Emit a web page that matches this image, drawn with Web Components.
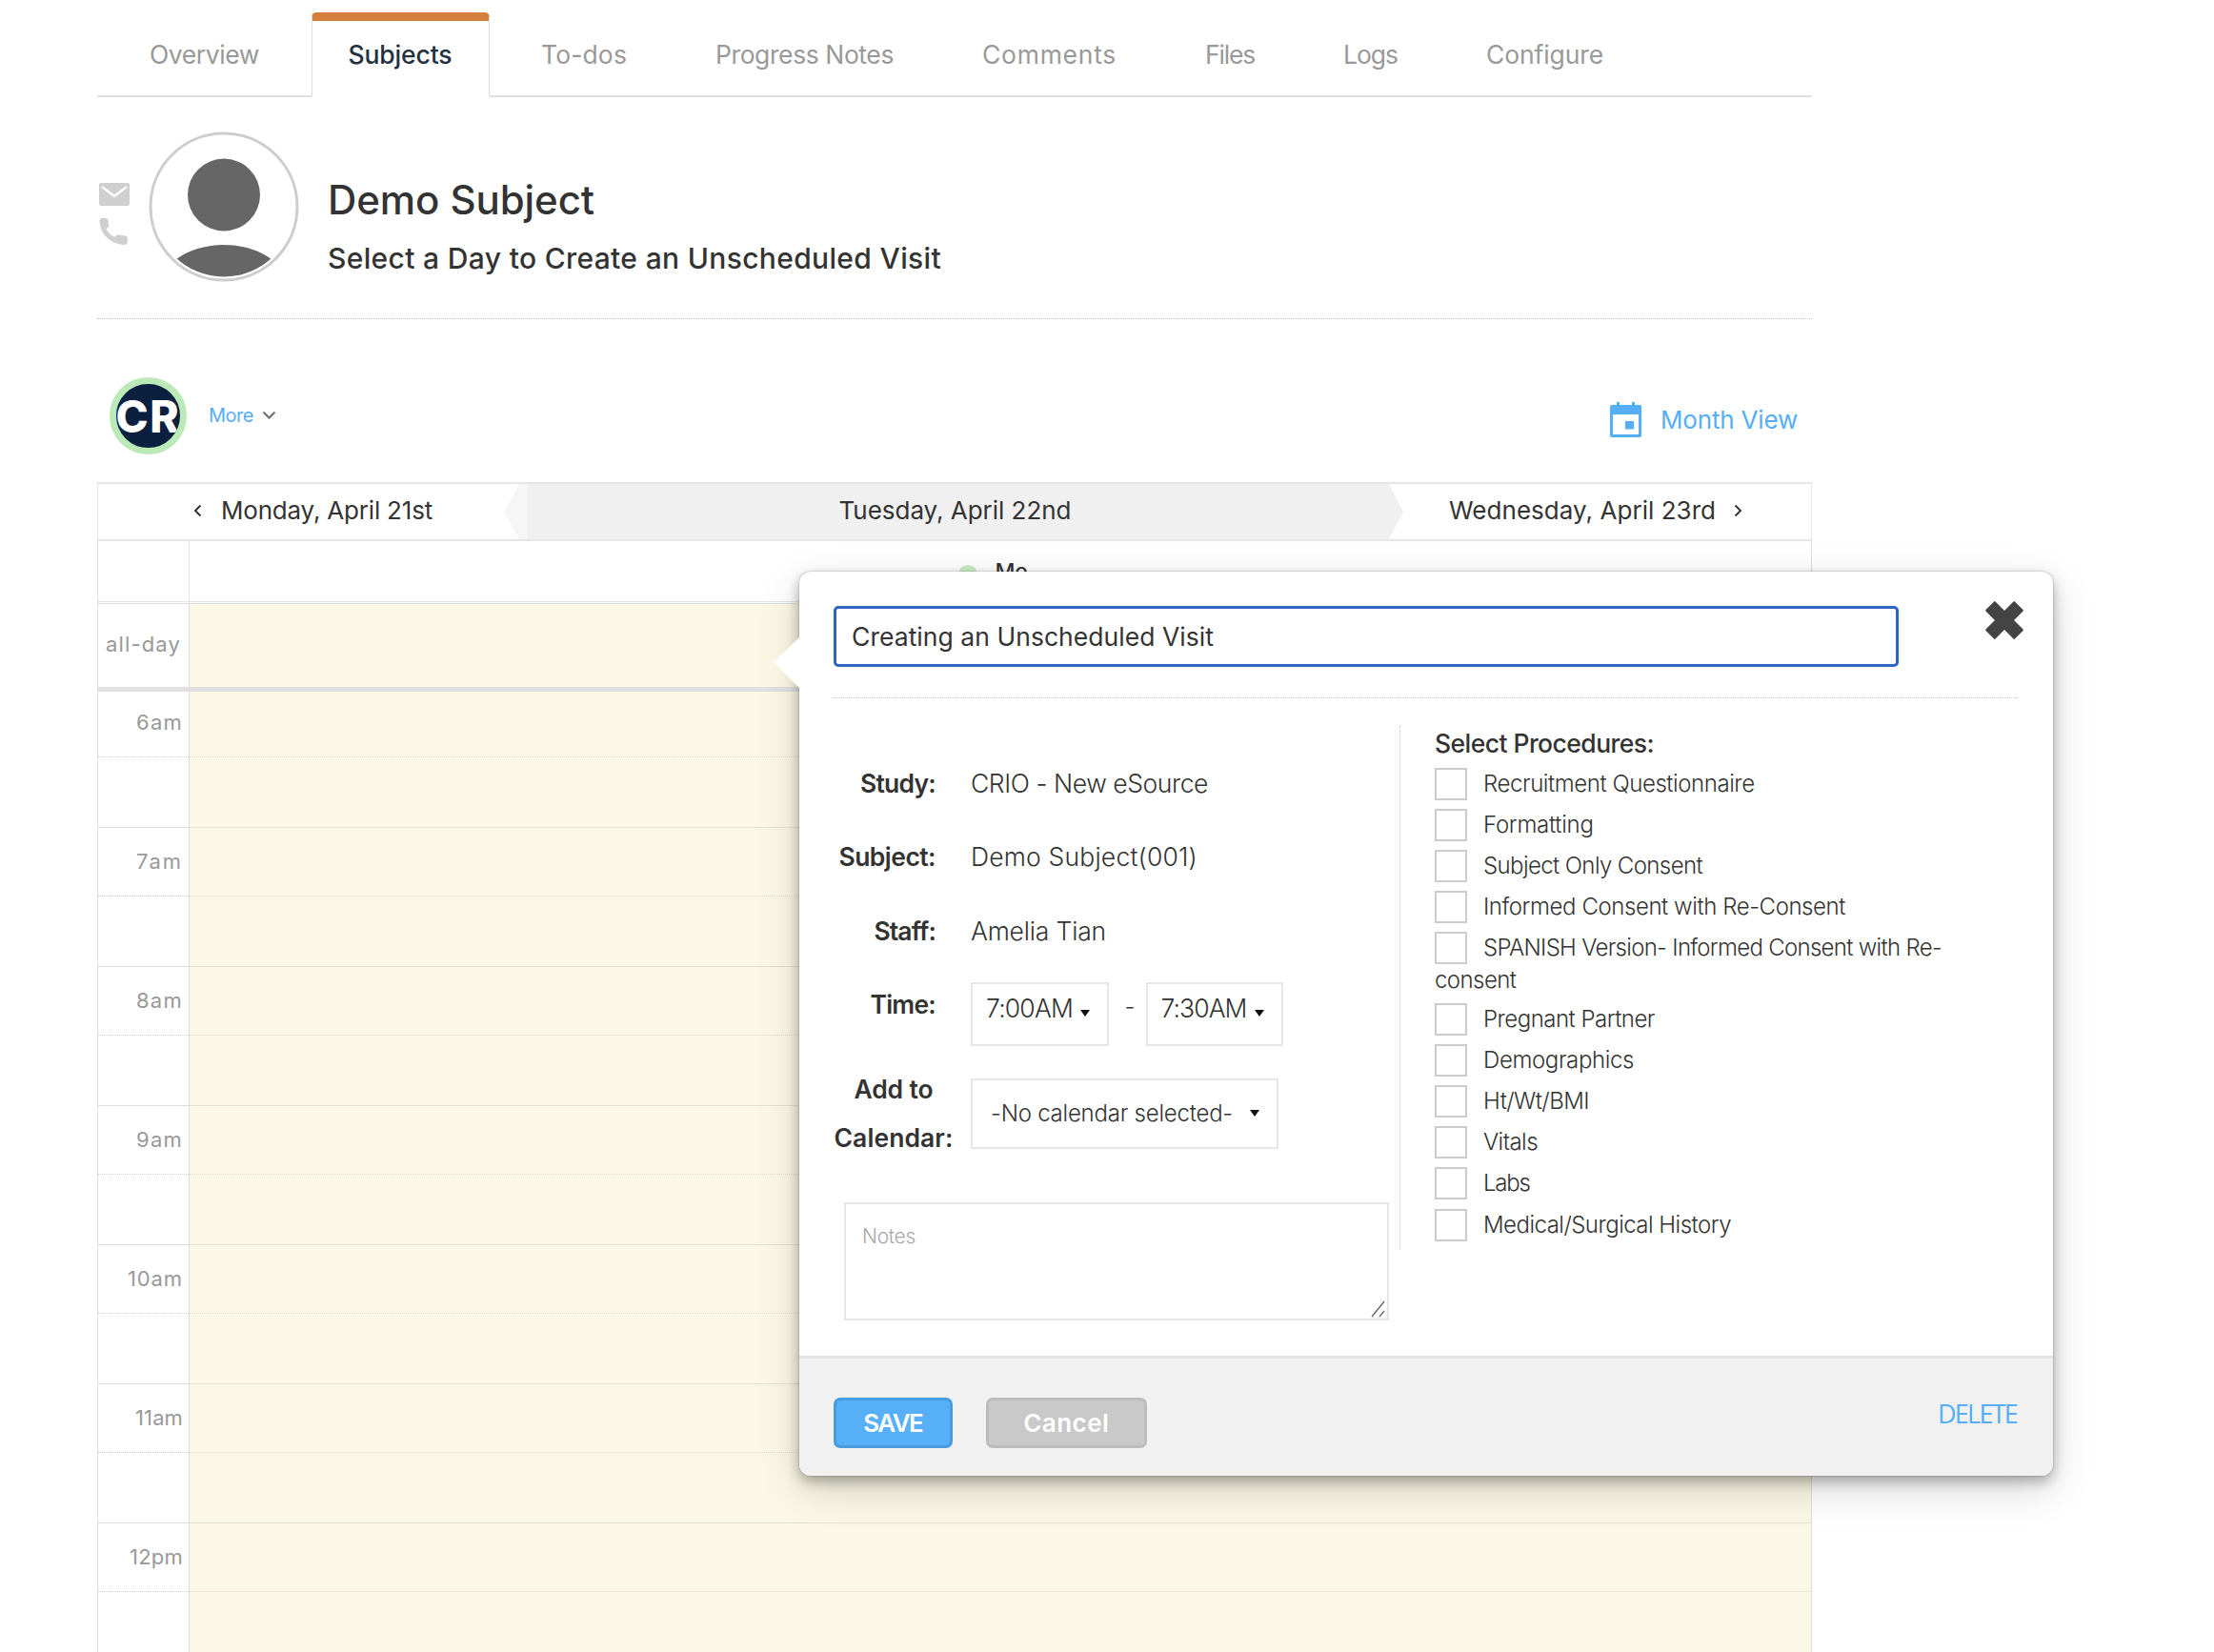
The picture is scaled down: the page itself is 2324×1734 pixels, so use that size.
<!DOCTYPE html>
<html lang="en">
<head>
<meta charset="utf-8">
<title>Creating an Unscheduled Visit</title>
<style>
html,body{margin:0;padding:0;background:#fff}
body{width:2324px;height:1734px;overflow:hidden;position:relative;font-family:Inter,"Noto Sans",sans-serif;color:#333}
</style>
</head>
<body>
<main-col>
  <tab-bar>
    <tab-item style="width:192px"><x-t w="115">Overview</x-t></tab-item>
    <tab-item active style="width:187px"><x-t w="109">Subjects</x-t></tab-item>
    <tab-item style="width:167px"><x-t w="90">To-dos</x-t></tab-item>
    <tab-item style="width:264px"><x-t w="187">Progress Notes</x-t></tab-item>
    <tab-item style="width:218px"><x-t w="141">Comments</x-t></tab-item>
    <tab-item style="width:129px"><x-t w="52">Files</x-t></tab-item>
    <tab-item style="width:134px"><x-t w="57">Logs</x-t></tab-item>
    <tab-item style="width:200px"><x-t w="123">Configure</x-t></tab-item>
  </tab-bar>
  <subject-header>
    <x-t slot="name" w="280">Demo Subject</x-t>
    <x-t slot="sub" w="644">Select a Day to Create an Unscheduled Visit</x-t>
  </subject-header>
  <cal-toolbar></cal-toolbar>
  <day-nav></day-nav>
  <cal-grid></cal-grid>
</main-col>
<visit-popup></visit-popup>

<script>
class MainCol extends HTMLElement{
  constructor(){super();this.attachShadow({mode:'open'}).innerHTML=`<style>:host{display:block;width:1800px;height:1734px;overflow:hidden;margin-left:102px}</style><slot></slot>`}
}
class TabBar extends HTMLElement{
  constructor(){super();this.attachShadow({mode:'open'}).innerHTML=`<style>
  :host{display:flex;gap:16px;box-sizing:border-box;height:102px;padding:13px 0 0 16.5px;border-bottom:2px solid #e0e0e0;font-size:26.5px}
  </style><slot></slot>`}
}
class TabItem extends HTMLElement{
  constructor(){super();this.attachShadow({mode:'open'}).innerHTML=`<style>
  :host{display:flex;align-items:center;justify-content:center;box-sizing:border-box;height:89px;padding-bottom:11px;color:#999;border:solid transparent;border-width:9px 1px 0;flex:none;line-height:36px}
  :host([active]){color:#22303f;font-weight:500;background:#fff;border-color:#d4803c #ddd #fff;border-top-left-radius:5px;border-top-right-radius:5px;border-bottom:2px solid #fff;padding-bottom:9px}
  </style><slot></slot>`}
}
class SubjectHeader extends HTMLElement{
  constructor(){super();this.attachShadow({mode:'open'}).innerHTML=`<style>
  :host{display:flex;align-items:flex-start;box-sizing:border-box;height:233px;padding-top:36px;border-bottom:1px dotted #c4c4c4}
  .contact{width:32px;margin:54px 19.500px 0 2px;display:flex;flex-direction:column;gap:12px}
  svg{display:block}
  .txt{margin-left:30.500px;padding-top:42px;display:flex;flex-direction:column}
  .name{font-size:42px;line-height:60px;font-weight:500;color:#333}
  .sub{font-size:30px;line-height:40px;font-weight:500;color:#333;margin-top:11px}
  </style>
  <div class="contact">
    <svg width="32" height="24" viewBox="0 0 32 24"><rect width="32" height="24" rx="2" fill="#cfcfcf"/><path d="M3 4l13 10L29 4" fill="none" stroke="#fff" stroke-width="2.4"/></svg>
    <svg width="32" height="31" viewBox="0 0 30 30" preserveAspectRatio="none"><path d="M3 1h3.500c1.200 0 2 .8 2.200 1.800l.8 5.200c.1 1-.2 1.900-.9 2.500l-1.600 1.400c1.800 4 4.600 6.700 8.500 8.300l1.300-1.500c.7-.7 1.600-1 2.500-.9l6.200 1c1.200.2 2.500 1.100 2.500 2.400v3.800c0 1.700-1.300 3-3 3C11 27.500 .5 17 .5 3.500 .5 2 1.500 1 3 1z" fill="#cfcfcf"/></svg>
  </div>
  <svg width="158" height="158" viewBox="0 0 158 158">
    <defs><clipPath id="av"><circle cx="79" cy="78.500" r="74"/></clipPath></defs>
    <circle cx="79" cy="79" r="77" fill="#fff" stroke="#cdcdcd" stroke-width="3"/>
    <circle cx="79" cy="66.500" r="38" fill="#666"/>
    <ellipse cx="79" cy="169" rx="70" ry="50" fill="#666" clip-path="url(#av)"/>
  </svg>
  <div class="txt"><div class="name"><slot name="name"></slot></div><div class="sub"><slot name="sub"></slot></div></div>`}
}
class CalToolbar extends HTMLElement{
  constructor(){super();this.attachShadow({mode:'open'}).innerHTML=`<style>
  :host{display:flex;align-items:center;box-sizing:border-box;height:171px;padding:28px 15px 0 13px;color:#55aef6}
  .logo{width:81px;height:81px;margin-top:4px;box-sizing:border-box;border-radius:50%;border:7px solid #bbe9b7;background:#0b1f3f;color:#fff;font-weight:800;font-size:46px;line-height:64px;overflow:hidden;display:flex;align-items:center;justify-content:center;flex:none}
  .more{margin-left:23px;font-size:20px;line-height:26px;display:flex;align-items:center;gap:9px;margin-top:2px}
  .mv{margin-left:auto;display:flex;align-items:center;gap:20px;font-size:26px;margin-top:12px}
  svg{display:block}
  </style>
  <div class="logo"><x-t w="68">CR</x-t></div>
  <div class="more"><x-t w="47">More</x-t><svg width="15" height="10" viewBox="0 0 15 10"><path d="M1.500 1.500l6 6 6-6" fill="none" stroke="#777" stroke-width="2.400"/></svg></div>
  <div class="mv">
    <svg width="33" height="37" viewBox="0 0 33 37"><path d="M7 0h3v6H7zM23 0h3v6h-3z" fill="#55aef6"/><rect y="3" width="33" height="34" rx="2" fill="#55aef6"/><rect x="3" y="13" width="27" height="21" fill="#fff"/><rect x="16" y="20" width="9" height="8.500" fill="#55aef6"/></svg>
    <x-t w="144">Month View</x-t>
  </div>`}
}
class DayNav extends HTMLElement{
  constructor(){super();this.attachShadow({mode:'open'}).innerHTML=`<style>
  :host{display:flex;box-sizing:border-box;height:62px;border:solid #e6e6e6;border-width:2px 1px;font-size:26px;color:#333;background:#fff}
  .cell{display:flex;align-items:center;padding-bottom:3px;box-sizing:border-box}
  .l{width:426px;flex:none;padding-left:100px;gap:20px}
  .m{width:944px;flex:none;justify-content:center;padding-left:3px;background:linear-gradient(90deg,#f6f6f6 25px,#f0f0f0 25px);clip-path:polygon(0 50%,16px 0,calc(100% - 15px) 0,100% 50%,calc(100% - 15px) 100%,16px 100%)}
  .r{padding-left:48px;gap:19px}
  svg{display:block}
  </style>
  <div class="cell l"><svg width="9" height="14" viewBox="0 0 9 14"><path d="M7.500 1.500L2 7l5.500 5.500" fill="none" stroke="#333" stroke-width="2"/></svg><x-t w="222">Monday, April 21st</x-t></div>
  <div class="cell m"><x-t w="244">Tuesday, April 22nd</x-t></div>
  <div class="cell r"><x-t w="280">Wednesday, April 23rd</x-t><svg width="9" height="14" viewBox="0 0 9 14"><path d="M1.500 1.500L7 7l-5.500 5.500" fill="none" stroke="#333" stroke-width="2"/></svg></div>`}
}
class HourRow extends HTMLElement{
  constructor(){super();this.attachShadow({mode:'open'}).innerHTML=`<style>
  :host{display:grid;grid-template-columns:96px 1fr;box-sizing:border-box;height:146px;font-size:22px;color:#999}
  .a{border-right:1px solid #ddd;box-sizing:border-box;padding-right:7px;display:flex;flex-direction:column}
  .lb{height:72px;box-sizing:border-box;border-bottom:1px dotted #d4d4d4;display:flex;justify-content:flex-end;align-items:center;padding-bottom:1px;margin-right:-7px;padding-right:6px}
  .a2{flex:1;border-bottom:1px solid #ddd;margin-right:-7px}
  .c{background:#fbf8e5;display:flex;flex-direction:column}
  .h1{height:72px;box-sizing:border-box;border-bottom:1px dotted #e2ddc8}
  .h2{flex:1;border-bottom:1px solid #e5dfd6}
  </style>
  <div class="a"><div class="lb"><slot></slot></div><div class="a2"></div></div>
  <div class="c"><div class="h1"></div><div class="h2"></div></div>`}
}
class CalGrid extends HTMLElement{
  constructor(){super();
    const hrs=[['6am',49],['7am',49],['8am',49],['9am',49],['10am',58],['11am',50],['12pm',56]];
    this.attachShadow({mode:'open'}).innerHTML=`<style>
  :host{display:block;border:solid #ddd;border-width:0 1px}
  .hd{display:grid;grid-template-columns:96px 1fr;height:64px;box-sizing:border-box;border-bottom:1px solid #e4e4e4}
  .hd>div:first-child{border-right:1px solid #e4e4e4}
  .me{display:flex;justify-content:center;padding:19px 16px 0 0;gap:19px;font-size:23px;line-height:26px;font-weight:500}
  .dot{width:20px;height:20px;border-radius:50%;background:#c8efc3;margin-top:6px}
  .ad{display:grid;grid-template-columns:96px 1fr;height:93px;box-sizing:border-box;border-top:1px solid #ddd;margin-top:1px;border-bottom:5px solid #e2e0e0;margin-bottom:-3px;position:relative;z-index:1;font-size:22px;color:#999}
  .ad .x{border-right:1px solid #ddd;display:flex;align-items:center;justify-content:center;padding-bottom:3px}
  .ad .y{background:#fbf8e5}
  </style>
  <div class="hd"><div></div><div class="me"><span class="dot"></span><x-t w="34">Me</x-t></div></div>
  <div class="ad"><div class="x"><x-t w="79">all-day</x-t></div><div class="y"></div></div>
  ${hrs.map(h=>`<hour-row><x-t w="${h[1]}">${h[0]}</x-t></hour-row>`).join('')}`}
}
class FormRow extends HTMLElement{
  constructor(){super();this.attachShadow({mode:'open'}).innerHTML=`<style>
  :host{display:flex;align-items:flex-start;font-size:26.500px;line-height:40px}
  .lb{width:107px;text-align:right;margin-right:37px;font-weight:600;color:#333;flex:none;white-space:nowrap}
  .v{font-weight:300;color:#333}
  </style><div class="lb"><slot name="label"></slot></div><div class="v"><slot></slot></div>`}
}
class DropBox extends HTMLElement{
  constructor(){super();this.attachShadow({mode:'open'}).innerHTML=`<style>
  :host{display:flex;box-sizing:border-box;border:2px solid #e6e6e6;font-weight:300;color:#333;flex:none;gap:8px;padding-left:14px}
  .car{width:0;height:0;border:solid transparent;border-width:7px 5.500px 0;border-top-color:#111;flex:none;margin-top:var(--car-top,0)}
  </style><slot></slot><span class="car"></span>`}
}
class ProcItem extends HTMLElement{
  constructor(){super();this.attachShadow({mode:'open'}).innerHTML=`<style>
  :host{display:block;font-size:24px;line-height:34px;font-weight:300;color:#333;margin-bottom:9px;min-height:34px}
  .cb{display:inline-block;width:34px;height:34px;box-sizing:border-box;border:2px solid #ccc;background:#fff;vertical-align:top;margin-right:17px}
  </style><span class="cb"></span><slot></slot>`}
}
class VisitPopup extends HTMLElement{
  constructor(){super();this.attachShadow({mode:'open'}).innerHTML=`<style>
  :host{position:absolute;left:839px;top:600px;width:1316px;height:949px;box-sizing:border-box;display:flex;flex-direction:column;background:#fff;border-radius:12px;box-shadow:0 0 2px rgba(0,0,0,.35),0 6px 14px rgba(0,0,0,.28),0 14px 44px rgba(0,0,0,.16);z-index:5}
  .arrow{position:absolute;left:-27px;top:68px;width:28px;height:55px;background:#fff;clip-path:polygon(0 50%,100% 0,100% 100%)}
  .head{margin:36px 37px 0 36px;height:97px;box-sizing:border-box;border-bottom:1px dotted #c9c9c9;display:flex;align-items:flex-start}
  .title{width:1118px;height:64px;box-sizing:border-box;border:3px solid #2f63c4;border-radius:5px;font-size:26.500px;line-height:58px;padding-left:16px;color:#333;font-weight:400;flex:none}
  .x{margin:-7px 0 0 89px;display:block;flex:none}
  .body{display:grid;grid-template-columns:594px 1fr;margin:29px 37px 0 36px;flex:1;align-items:start}
  .left{display:flex;flex-direction:column}
  .r1{margin-top:40px}.r2{margin-top:37px}.r3{margin-top:38px}.r4{margin-top:34px}.r5{margin-top:34px}
  .lab4{margin-top:3px}
  .time{display:flex;align-items:flex-start}
  .time drop-box{height:67px;font-size:26.500px;line-height:51px;align-items:flex-start;--car-top:27px}
  .time .dash{width:39px;box-sizing:border-box;padding-left:6px;text-align:center;line-height:51px;font-weight:300;font-size:24px}
  .d1{width:144.500px}.d2{width:144px}
  .cal{font-size:24px;width:323px;height:73.500px;padding-left:19px;line-height:69px;gap:18px;align-items:center}
  .r5 .stack{display:flex;flex-direction:column;align-items:center;margin:-14.500px 0 -14px 0;line-height:51px;width:126px;text-align:center}
  .notes{margin:56.500px 0 0 11px;width:571.500px;height:124px;box-sizing:border-box;border:2px solid #e6e6e6;font-size:21px;color:#a8a8a8;padding:19px 0 0 17px;font-weight:300;line-height:30px;position:relative}
  .grip{position:absolute;right:1px;bottom:1px;display:block}
  .right{height:550px;box-sizing:border-box;border-left:1px dotted #c9c9c9;padding-left:36px}
  .sel{font-size:26.500px;line-height:36px;font-weight:500;margin-bottom:8px;color:#333}
  .foot{height:126px;box-sizing:border-box;border-top:3px solid #e4e4e4;background:#f1f1f2;border-radius:0 0 12px 12px;display:flex;align-items:flex-start;padding:41px 38px 0 36px}
  .btn{height:53px;box-sizing:border-box;border-radius:7px;border:3px solid;display:flex;align-items:center;justify-content:center;color:#fff;font-size:26px;font-weight:600}
  .save{width:124.500px;background:#56aff7;border-color:#4a9ade}
  .cancel{width:168.500px;margin-left:35.500px;background:#c9c9c9;border-color:#bcbcbc}
  .del{margin-left:auto;color:#55aef6;font-family:"Open Sans",sans-serif;font-size:27px;line-height:34px;font-weight:400}
  </style>
  <div class="arrow"></div>
  <div class="head">
    <div class="title"><x-t w="380">Creating an Unscheduled Visit</x-t></div>
    <svg class="x" width="44" height="44" viewBox="0 0 41 41"><path d="M3 11l8-8 9.500 9.500L30 3l8 8-9.500 9.500L38 30l-8 8-9.500-9.500L11 38l-8-8 9.500-9.500z" fill="#444" stroke="#444" stroke-width="2" stroke-linejoin="round"/></svg>
  </div>
  <div class="body">
    <div class="left">
      <form-row class="r1"><x-t slot="label" w="79">Study:</x-t><x-t w="249">CRIO - New eSource</x-t></form-row>
      <form-row class="r2"><x-t slot="label" w="101.500">Subject:</x-t><x-t w="238">Demo Subject(001)</x-t></form-row>
      <form-row class="r3"><x-t slot="label" w="64.600">Staff:</x-t><x-t w="142">Amelia Tian</x-t></form-row>
      <form-row class="r4"><x-t slot="label" class="lab4" w="68.500">Time:</x-t>
        <div class="time">
          <drop-box class="d1"><x-t w="91">7:00AM</x-t></drop-box>
          <span class="dash">-</span>
          <drop-box class="d2"><x-t w="90">7:30AM</x-t></drop-box>
        </div>
      </form-row>
      <form-row class="r5"><span slot="label" class="stack"><x-t w="83">Add to</x-t><x-t w="125">Calendar:</x-t></span>
        <drop-box class="cal"><x-t w="254">-No calendar selected-</x-t></drop-box>
      </form-row>
      <div class="notes"><x-t w="56">Notes</x-t>
        <svg class="grip" width="16" height="18" viewBox="0 0 16 18"><path d="M1 17L14 1M9 17l5-6" stroke="#666" stroke-width="1.300" fill="none"/></svg>
      </div>
    </div>
    <div class="right">
      <div class="sel"><x-t w="230">Select Procedures:</x-t></div>
      <proc-item><x-t w="284.600">Recruitment Questionnaire</x-t></proc-item>
      <proc-item><x-t w="115.600">Formatting</x-t></proc-item>
      <proc-item><x-t w="230">Subject Only Consent</x-t></proc-item>
      <proc-item><x-t w="380">Informed Consent with Re-Consent</x-t></proc-item>
      <proc-item style="margin-bottom:7px"><x-t w="481">SPANISH Version- Informed Consent with Re-</x-t><br><x-t w="85.400">consent</x-t></proc-item>
      <proc-item><x-t w="180">Pregnant Partner</x-t></proc-item>
      <proc-item><x-t w="158">Demographics</x-t></proc-item>
      <proc-item><x-t w="111">Ht/Wt/BMI</x-t></proc-item>
      <proc-item><x-t w="57">Vitals</x-t></proc-item>
      <proc-item style="margin-bottom:10px"><x-t w="48.600">Labs</x-t></proc-item>
      <proc-item><x-t w="260">Medical/Surgical History</x-t></proc-item>
    </div>
  </div>
  <div class="foot">
    <div class="btn save"><x-t w="62">SAVE</x-t></div>
    <div class="btn cancel"><x-t w="90">Cancel</x-t></div>
    <div class="del"><x-t w="83">DELETE</x-t></div>
  </div>`}
}
/* fits a run of text to its measured width in the design, via letter-spacing */
class XT extends HTMLElement{
  constructor(){super();this.attachShadow({mode:'open'}).innerHTML=`<style>:host{display:inline-block;white-space:nowrap;vertical-align:top}</style><slot></slot>`}
  connectedCallback(){
    const w=parseFloat(this.getAttribute('w'));if(!w)return;
    const n=this.textContent.length;
    const cur=this.getBoundingClientRect().width;
    if(cur>0)this.style.letterSpacing=((w-cur)/n).toFixed(3)+'px';
  }
}
customElements.define('main-col',MainCol);
customElements.define('tab-bar',TabBar);
customElements.define('tab-item',TabItem);
customElements.define('subject-header',SubjectHeader);
customElements.define('cal-toolbar',CalToolbar);
customElements.define('day-nav',DayNav);
customElements.define('hour-row',HourRow);
customElements.define('cal-grid',CalGrid);
customElements.define('form-row',FormRow);
customElements.define('drop-box',DropBox);
customElements.define('proc-item',ProcItem);
customElements.define('visit-popup',VisitPopup);
customElements.define('x-t',XT);
</script>
</body>
</html>
